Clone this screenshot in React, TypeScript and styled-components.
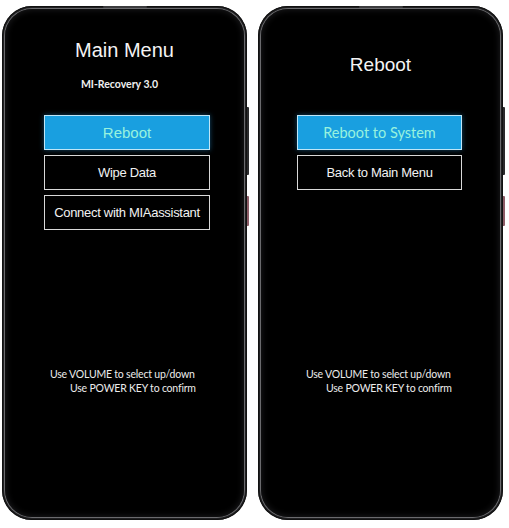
import React from "react";
import styled, { createGlobalStyle } from "styled-components";

const Global = createGlobalStyle`
  html, body { margin: 0; padding: 0; background: #ffffff; }
  body { width: 509px; height: 528px; overflow: hidden; }
`;

const Page = styled.div`
  display: flex;
  gap: 11px;
  padding: 6px 0 0 2px;
`;

const Phone = styled.div`
  position: relative;
  width: 245px;
  height: 514px;
  box-sizing: border-box;
  padding: 3px;
  border-radius: 30px;
  background: #202022;
  box-shadow: inset 0 0 0 1px #111;
`;

const Earpiece = styled.div`
  position: absolute;
  top: 0;
  left: 50%;
  width: 44px;
  height: 2px;
  margin-left: -22px;
  background: #3c3c3e;
  border-radius: 1px;
`;

const SideKey = styled.div<{ $top: number; $height: number; $red?: boolean }>`
  position: absolute;
  right: -2px;
  top: ${(p) => p.$top}px;
  width: 2px;
  height: ${(p) => p.$height}px;
  border-radius: 0 1px 1px 0;
  background: ${(p) => (p.$red ? "#8c5c66" : "#2a2a2c")};
`;

const Screen = styled.div`
  height: 100%;
  box-sizing: border-box;
  border-radius: 27px;
  background: #000;
  box-shadow: 0 0 0 1px #6b6b6e, inset 0 0 6px 1px #1a1a1c;
  display: flex;
  flex-direction: column;
  padding-bottom: 122px;
`;

const Header = styled.div<{ $shift: number }>`
  height: 106px;
  box-sizing: border-box;
  padding-top: ${(p) => p.$shift}px;
  display: flex;
  flex-direction: column;
  align-items: center;
  justify-content: center;
  gap: 16px;
`;

const Title = styled.div<{ $size: number }>`
  font-family: "Liberation Sans", Arial, sans-serif;
  font-size: ${(p) => p.$size}px;
  line-height: 24px;
  color: #f4f4f4;
`;

const Subtitle = styled.div`
  font-family: Lato, "Liberation Sans", sans-serif;
  font-weight: 700;
  font-size: 10.5px;
  line-height: 12px;
  color: #f0f0f0;
  margin-left: -10px;
`;

const Menu = styled.div<{ $left: number; $right: number }>`
  display: flex;
  flex-direction: column;
  gap: 5px;
  padding: 0 ${(p) => p.$right}px 0 ${(p) => p.$left}px;
`;

const Item = styled.div<{ $active?: boolean; $calibri?: boolean }>`
  height: 35px;
  box-sizing: border-box;
  display: flex;
  align-items: center;
  justify-content: center;
  border: 1px solid ${(p) => (p.$active ? "#bfe6f7" : "#d8d8d8")};
  background: ${(p) => (p.$active ? "#199fe0" : "#000")};
  box-shadow: ${(p) => (p.$active ? "0 0 5px rgba(40,160,230,0.45)" : "none")};
  color: ${(p) => (p.$active ? "#98f2de" : "#f2f2f2")};
  font-family: ${(p) =>
    p.$calibri ? 'Lato, "Liberation Sans", sans-serif' : '"Liberation Sans", Arial, sans-serif'};
  font-size: ${(p) => (p.$active ? (p.$calibri ? 14.5 : 15) : 13)}px;
  letter-spacing: ${(p) => (p.$active ? "0" : "-0.3px")};
  white-space: nowrap;
`;

const Hints = styled.div`
  margin-top: auto;
  padding-left: 45px;
  font-family: Lato, "Liberation Sans", sans-serif;
  font-size: 10.5px;
  letter-spacing: -0.2px;
  line-height: 14px;
  color: #ececec;
  white-space: nowrap;
`;

const HintLine = styled.div<{ $indent?: number }>`
  padding-left: ${(p) => p.$indent ?? 0}px;
`;

type Entry = { label: string; active?: boolean; calibri?: boolean };

type DeviceProps = {
  title: string;
  titleSize: number;
  titleShift: number;
  subtitle?: string;
  menuLeft: number;
  menuRight: number;
  items: Entry[];
};

const Device: React.FC<DeviceProps> = ({ title, titleSize, titleShift, subtitle, menuLeft, menuRight, items }) => (
  <Phone>
    <Earpiece />
    <SideKey $top={101} $height={68} />
    <SideKey $top={190} $height={30} $red />
    <Screen>
      <Header $shift={titleShift}>
        <Title $size={titleSize}>{title}</Title>
        {subtitle && <Subtitle>{subtitle}</Subtitle>}
      </Header>
      <Menu $left={menuLeft} $right={menuRight}>
        {items.map((it) => (
          <Item key={it.label} $active={it.active} $calibri={it.calibri}>
            {it.label}
          </Item>
        ))}
      </Menu>
      <Hints>
        <HintLine>Use VOLUME to select up/down</HintLine>
        <HintLine $indent={20}>Use POWER KEY to confirm</HintLine>
      </Hints>
    </Screen>
  </Phone>
);

export default function App() {
  return (
    <>
      <Global />
      <Page>
        <Device
          title="Main Menu"
          titleSize={20}
          titleShift={4}
          subtitle="MI-Recovery 3.0"
          menuLeft={39}
          menuRight={34}
          items={[
            { label: "Reboot", active: true },
            { label: "Wipe Data" },
            { label: "Connect with MIAassistant" },
          ]}
        />
        <Device
          title="Reboot"
          titleSize={19}
          titleShift={6}
          menuLeft={36}
          menuRight={38}
          items={[
            { label: "Reboot to System", active: true, calibri: true },
            { label: "Back to Main Menu" },
          ]}
        />
      </Page>
    </>
  );
}
